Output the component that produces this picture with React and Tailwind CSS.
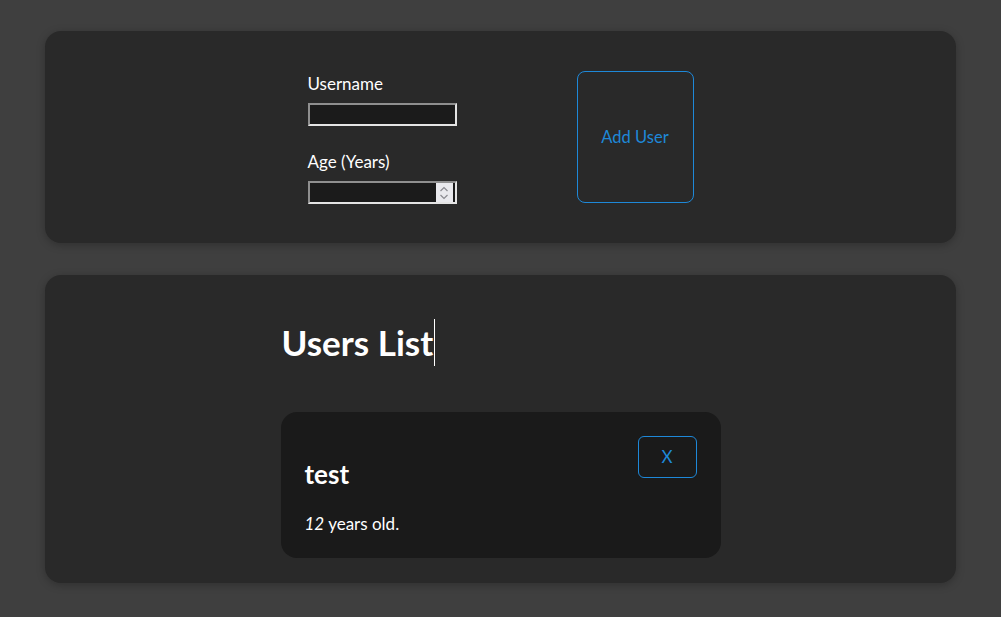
import React, { useState } from "react";

const fieldBorder =
  "border-2 border-t-[#8f8f8f] border-l-[#8f8f8f] border-b-[#e4e4e4] border-r-[#e4e4e4]";

const AddUserForm = () => {
  return (
    <div className="bg-[#292929] rounded-2xl shadow-[0_2px_8px_rgba(0,0,0,0.25)] pt-10 pb-[39px] flex justify-center">
      <div className="flex items-stretch gap-[120px]">
        <div className="flex flex-col w-[149px]">
          <label className="text-[17px] leading-[20px] text-white mt-[3px]">Username</label>
          <input
            type="text"
            className={`mt-[9px] h-[23px] w-[149px] bg-[#1b1b1b] text-white outline-none ${fieldBorder}`}
          />
          <label className="text-[17px] leading-[20px] text-white mt-[26px]">Age (Years)</label>
          <div className={`mt-[9px] h-[23px] w-[149px] bg-[#1b1b1b] flex ${fieldBorder}`}>
            <input type="text" inputMode="numeric" className="flex-1 min-w-0 bg-transparent text-white outline-none" />
            <div className="w-[17px] mr-[2px] bg-[#e9e9ed] flex items-center justify-center">
              <svg width="10" height="16" viewBox="0 0 10 16" fill="none" stroke="#8a8a8f" strokeWidth="1.2">
                <path d="M1.5 6 L5 2.5 L8.5 6" />
                <path d="M1.5 10 L5 13.5 L8.5 10" />
              </svg>
            </div>
          </div>
        </div>
        <button className="w-[117px] h-[132px] rounded-lg border border-[#1e88d8] text-[#1e88d8] text-[16.5px]">
          Add User
        </button>
      </div>
    </div>
  );
};

const UsersList = ({ users }) => {
  return (
    <div className="bg-[#292929] rounded-2xl shadow-[0_2px_8px_rgba(0,0,0,0.25)] pt-11 pb-[25px] flex justify-center">
      <div className="w-[440px]">
        <h2 className="text-[35px] leading-[47px] font-bold text-white flex items-stretch ml-px">
          Users List
          <span className="w-px bg-white ml-px"></span>
        </h2>
        <div className="mt-[46px] flex flex-col gap-4">
          {users.map((u) => (
            <div key={u.name} className="bg-[#1a1a1a] rounded-2xl h-[146px] px-6 pt-6 flex justify-between">
              <div>
                <h3 className="mt-[22px] text-[26px] leading-[32px] font-bold text-white">{u.name}</h3>
                <p className="mt-[23px] text-[17px] leading-[22px] text-white">
                  <em>{u.age}</em> years old.
                </p>
              </div>
              <button className="w-[59px] h-[42px] rounded-md border border-[#1e88d8] text-[#1e88d8] text-[17px]">
                X
              </button>
            </div>
          ))}
        </div>
      </div>
    </div>
  );
};

export default function App() {
  const [users] = useState([{ name: "test", age: 12 }]);
  return (
    <div className="min-h-[617px] bg-[#3f3f3f] px-[45px] pt-[31px] pb-8 flex flex-col gap-[32px] font-['Lato','Noto_Sans',sans-serif]">
      <AddUserForm />
      <UsersList users={users} />
    </div>
  );
}
